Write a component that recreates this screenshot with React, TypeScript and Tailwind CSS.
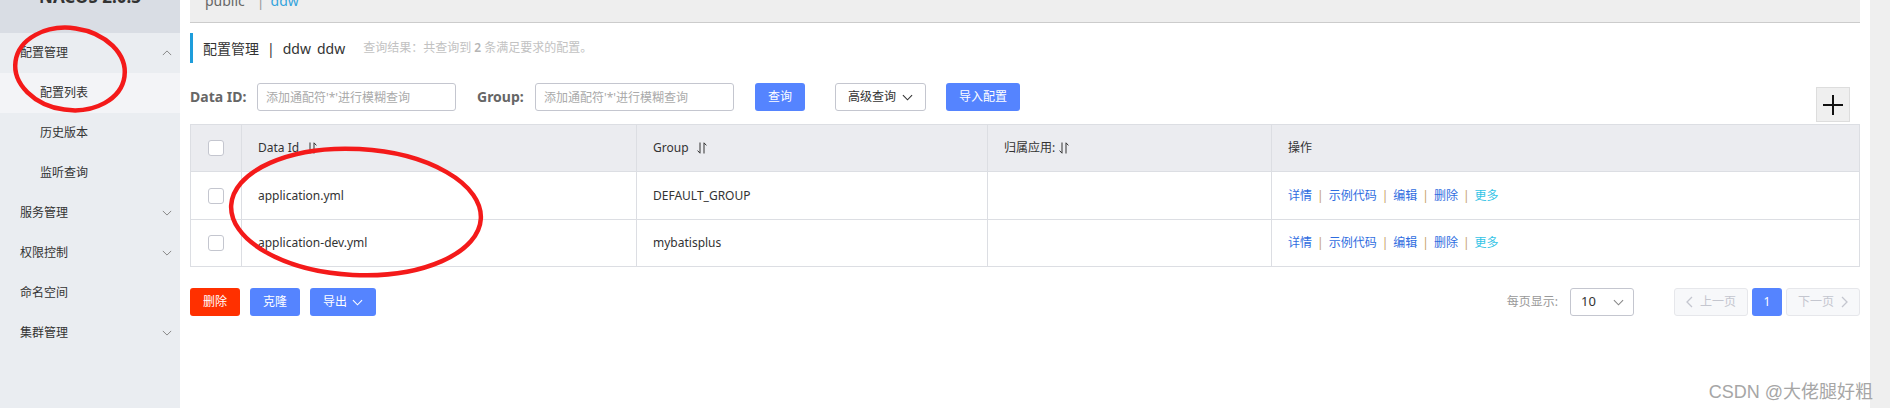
import React from "react";

const font = "font-['Noto_Sans','Noto_Sans_CJK_SC',sans-serif]";

function Chevron({ dir = "down", color = "#333", w = 12, h = 7 }: { dir?: "down" | "up"; color?: string; w?: number; h?: number }) {
  return (
    <svg width={w} height={h} viewBox="0 0 12 7" fill="none" stroke={color} strokeWidth="1.2">
      {dir === "down" ? <path d="M1 1l5 5 5-5" /> : <path d="M1 6l5-5 5 5" />}
    </svg>
  );
}

function SortIcon() {
  return (
    <svg width="10" height="12" viewBox="0 0 10 12" fill="none" stroke="#333" strokeWidth="1">
      <path d="M3 0.5V11.2M3 11.2L0.6 8.6" />
      <path d="M7 11.5V0.8M7 0.8L9.4 3.4" />
    </svg>
  );
}

function Checkbox() {
  return <span className="block h-[16px] w-[16px] rounded-[3px] border border-[#c4c6cf] bg-white" />;
}

const menu = [
  { label: "配置管理", group: true, open: true },
  { label: "配置列表", active: true },
  { label: "历史版本" },
  { label: "监听查询" },
  { label: "服务管理", group: true },
  { label: "权限控制", group: true },
  { label: "命名空间", group: true, plain: true },
  { label: "集群管理", group: true },
];

const rows = [
  { id: "application.yml", group: "DEFAULT_GROUP" },
  { id: "application-dev.yml", group: "mybatisplus" },
];

function Actions() {
  const sep = <span className="mx-[5px] text-[#c6a068]">|</span>;
  return (
    <div className="flex items-center text-[12px] text-[#2f6ddf]">
      <span>详情</span>
      {sep}
      <span>示例代码</span>
      {sep}
      <span>编辑</span>
      {sep}
      <span>删除</span>
      {sep}
      <span className="text-[#35c4e6]">更多</span>
    </div>
  );
}

export default function App() {
  return (
    <div className={`relative flex h-[408px] w-[1890px] overflow-hidden bg-white text-[12px] text-[#333] ${font}`}>
      {/* sidebar */}
      <aside className="w-[180px] shrink-0 bg-[#eaedf1]">
        <div className="h-[33px] overflow-hidden bg-[#d9dde4]">
          <div className="-mt-[13px] text-center text-[17px] leading-[20px] font-bold text-[#333]">NACOS 2.0.3</div>
        </div>
        {menu.map((m) => (
          <div
            key={m.label}
            className={`flex h-[40px] items-center justify-between pr-[8px] text-[12px] text-[#333] ${m.group ? "pl-[20px]" : "pl-[40px]"} ${m.active ? "bg-[#f3f4f7]" : ""}`}
          >
            <span>{m.label}</span>
            {m.group && !m.plain && <Chevron dir={m.open ? "up" : "down"} color="#888" w={10} h={6} />}
          </div>
        ))}
      </aside>

      {/* main */}
      <main className="flex min-w-0 flex-1 flex-col px-[10px]">
        <div className="h-[23px] overflow-hidden border-b border-[#ccc] bg-[#eee] pl-[15px]">
          <div className="-mt-[9px] flex text-[14px] leading-[20px] text-[#666]">
            <span>public</span>
            <span className="ml-[12px] text-[#999]">|</span>
            <span className="ml-[6px] text-[#33a3dc]">ddw</span>
          </div>
        </div>

        <div className="mt-[10px] flex h-[30px] items-center border-l-[3px] border-[#1e9ddb] pl-[10px] text-[14px] text-[#333]">
          <span>配置管理</span>
          <span className="mx-[8px]">|</span>
          <span>ddw</span>
          <span className="ml-[6px]">ddw</span>
          <span className="ml-[18px] text-[12px] text-[#c2c2c2]">
            查询结果：共查询到 <span className="font-semibold text-[#b5b5b5]">2</span> 条满足要求的配置。
          </span>
        </div>

        <div className="mt-[20px] flex items-start">
          <span className="w-[67px] text-[14px] leading-[28px] font-bold text-[#666]">Data ID:</span>
          <input
            className="h-[28px] w-[199px] rounded-[3px] border border-[#c4c6cf] px-[8px] text-[12px] outline-none placeholder:text-[#aaa]"
            placeholder="添加通配符'*'进行模糊查询"
          />
          <span className="ml-[21px] w-[58px] text-[14px] leading-[28px] font-bold text-[#666]">Group:</span>
          <input
            className="h-[28px] w-[199px] rounded-[3px] border border-[#c4c6cf] px-[8px] text-[12px] outline-none placeholder:text-[#aaa]"
            placeholder="添加通配符'*'进行模糊查询"
          />
          <button className="ml-[21px] h-[28px] w-[50px] rounded-[3px] bg-[#5584ff] text-[12px] text-white">查询</button>
          <button className="ml-[30px] flex h-[28px] w-[91px] items-center justify-center gap-[6px] rounded-[3px] border border-[#c4c6cf] bg-white text-[12px] text-[#333]">
            高级查询 <Chevron w={11} h={7} />
          </button>
          <button className="ml-[20px] h-[28px] w-[74px] rounded-[3px] bg-[#5584ff] text-[12px] text-white">导入配置</button>
          <div className="flex-1" />
          <button className="mr-[10px] mt-[4px] flex h-[35px] w-[34px] items-center justify-center border border-[#ddd] bg-[#efefef]">
            <svg width="20" height="20" viewBox="0 0 20 20" stroke="#111" strokeWidth="2">
              <path d="M10 0v20M0 10h20" />
            </svg>
          </button>
        </div>

        {/* table */}
        <div className="mt-[2px] border border-[#dcdee3]">
          <div className="grid h-[47px] grid-cols-[50px_395px_351px_284px_1fr] border-b border-[#dcdee3] bg-[#ebecf0]">
            <div className="flex items-center justify-center">
              <Checkbox />
            </div>
            <div className="flex items-center gap-[8px] border-l border-[#dcdee3] px-4">
              Data Id <SortIcon />
            </div>
            <div className="flex items-center gap-[8px] border-l border-[#dcdee3] px-4">
              Group <SortIcon />
            </div>
            <div className="flex items-center gap-[4px] border-l border-[#dcdee3] px-4">
              归属应用: <SortIcon />
            </div>
            <div className="flex items-center border-l border-[#dcdee3] px-4">操作</div>
          </div>
          {rows.map((r, i) => (
            <div
              key={r.id}
              className={`grid grid-cols-[50px_395px_351px_284px_1fr] ${i === 0 ? "h-[48px] border-b border-[#dcdee3]" : "h-[46px]"}`}
            >
              <div className="flex items-center justify-center">
                <Checkbox />
              </div>
              <div className="flex items-center border-l border-[#dcdee3] px-4">{r.id}</div>
              <div className="flex items-center border-l border-[#dcdee3] px-4">{r.group}</div>
              <div className="border-l border-[#dcdee3]" />
              <div className="flex items-center border-l border-[#dcdee3] px-4">
                <Actions />
              </div>
            </div>
          ))}
        </div>

        <div className="mt-[21px] flex h-[28px] items-center">
          <button className="h-[28px] w-[50px] rounded-[3px] bg-[#ff3000] text-[12px] text-white">删除</button>
          <button className="ml-[10px] h-[28px] w-[50px] rounded-[3px] bg-[#5584ff] text-[12px] text-white">克隆</button>
          <button className="ml-[10px] flex h-[28px] w-[66px] items-center justify-center gap-[5px] rounded-[3px] bg-[#5584ff] text-[12px] text-white">
            导出 <Chevron color="#fff" w={11} h={7} />
          </button>

          <div className="ml-auto flex items-center">
            <span className="mr-[12px] text-[12px] text-[#999]">每页显示:</span>
            <div className="flex h-[28px] w-[64px] items-center justify-between rounded-[3px] border border-[#c4c6cf] pl-[10px] pr-[9px] text-[13px] text-[#333]">
              <span>10</span>
              <Chevron color="#888" w={11} h={7} />
            </div>
            <div className="ml-[40px] flex h-[28px] w-[74px] items-center justify-center gap-[7px] rounded-[3px] border border-[#e6e7eb] bg-[#f7f8fa] text-[12px] text-[#c4c6cf]">
              <svg width="7" height="12" viewBox="0 0 7 12" fill="none" stroke="#c4c6cf" strokeWidth="1.3">
                <path d="M6 1L1 6l5 5" />
              </svg>
              上一页
            </div>
            <div className="ml-[4px] flex h-[28px] w-[30px] items-center justify-center rounded-[3px] bg-[#5584ff] text-[12px] text-white">1</div>
            <div className="ml-[4px] flex h-[28px] w-[74px] items-center justify-center gap-[7px] rounded-[3px] border border-[#e6e7eb] bg-[#f7f8fa] text-[12px] text-[#c4c6cf]">
              下一页
              <svg width="7" height="12" viewBox="0 0 7 12" fill="none" stroke="#c4c6cf" strokeWidth="1.3">
                <path d="M1 1l5 5-5 5" />
              </svg>
            </div>
          </div>
        </div>
      </main>

      <div className="w-[20px] shrink-0 bg-[#efefef]" />

      {/* annotation circles */}
      <svg className="pointer-events-none absolute left-0 top-0" width="1890" height="408" fill="none" stroke="#f41a1a" strokeWidth="4.5">
        <ellipse cx="70" cy="69" rx="55" ry="41" transform="rotate(8 70 69)" />
        <ellipse cx="356" cy="212" rx="125" ry="63" transform="rotate(3 356 212)" />
      </svg>

      <div className="pointer-events-none absolute bottom-[5px] right-[17px] font-['Liberation_Sans','Noto_Sans_CJK_SC',sans-serif] text-[18px] leading-[22px] text-[#a6a6a6]">
        CSDN @大佬腿好粗
      </div>
    </div>
  );
}
